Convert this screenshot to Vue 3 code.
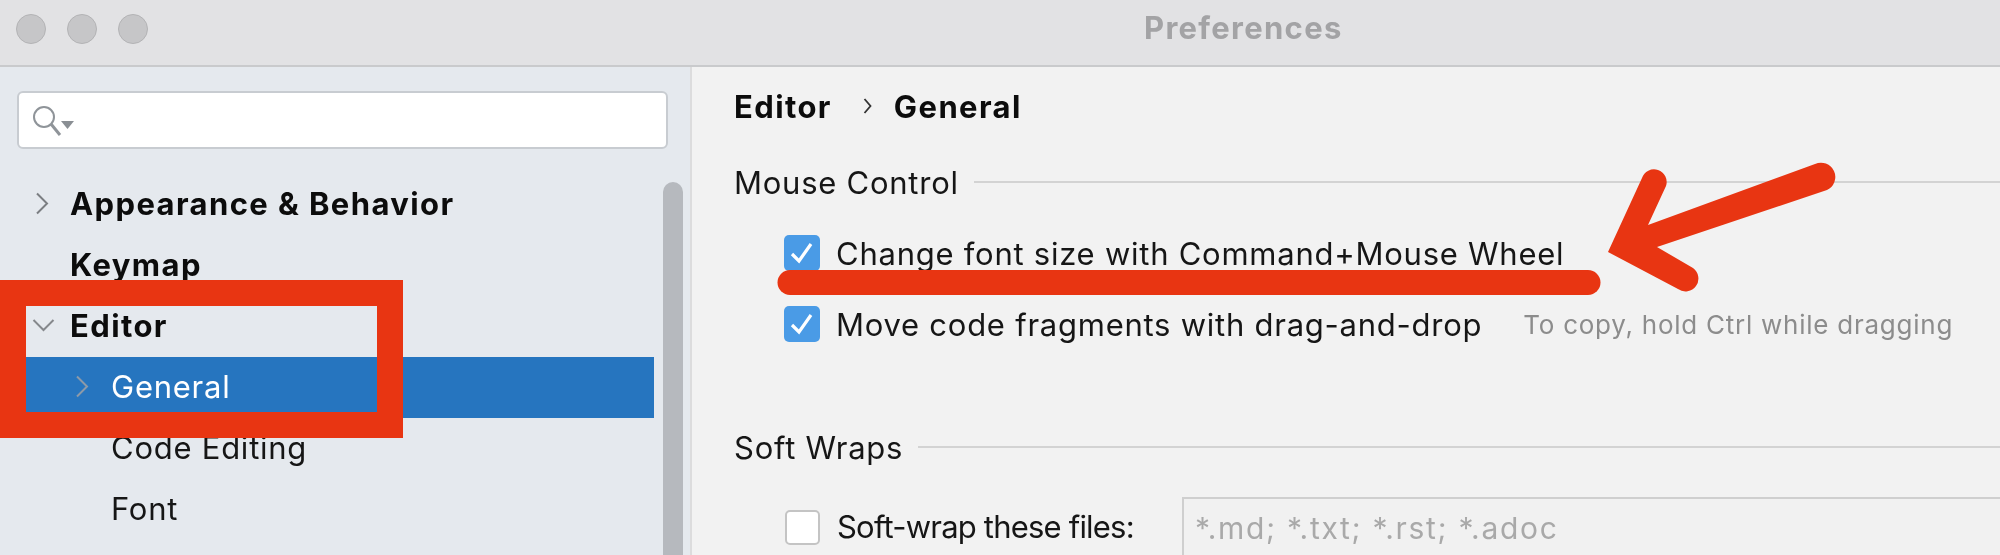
<template>
  <div class="window">
    <header class="titlebar">
      <div class="lights">
        <span class="light"></span>
        <span class="light"></span>
        <span class="light"></span>
      </div>
      <span class="title">Preferences</span>
    </header>

    <div class="body">
      <aside class="sidebar">
        <div class="search">
          <svg class="search-icon" width="44" height="34" viewBox="0 0 44 34">
            <circle cx="11" cy="11" r="10" fill="none" stroke="#8f9499" stroke-width="2" />
            <path d="M18 18 L27 29" fill="none" stroke="#8f9499" stroke-width="3" />
            <path d="M28 15 H41 L34.5 23 Z" fill="#8a8f94" />
          </svg>
        </div>

        <div class="tree">
          <div
            v-for="item in treeItems"
            :key="item.label"
            class="tree-row"
            :class="{ bold: item.depth === 0, selected: item.selected, child: item.depth === 1 }"
          >
            <span class="slot">
              <svg v-if="item.arrow === 'right'" class="chevron" width="14" height="23" viewBox="0 0 14 23">
                <path d="M2 1.5 L12 11.5 L2 21.5" fill="none" :stroke="item.selected ? '#8d9aa8' : '#7b7e82'" stroke-width="2" />
              </svg>
              <svg v-if="item.arrow === 'down'" class="chevron down" width="23" height="14" viewBox="0 0 23 14">
                <path d="M1.5 2 L11.5 12 L21.5 2" fill="none" stroke="#85888c" stroke-width="2" />
              </svg>
            </span>
            <span>{{ item.label }}</span>
          </div>
        </div>

        <div class="scrollbar"></div>
      </aside>

      <main class="content">
        <div class="crumbs">
          <span>Editor</span>
          <svg width="9" height="18" viewBox="0 0 9 18">
            <path d="M1.5 2 L7.5 9 L1.5 16" fill="none" stroke="#333" stroke-width="1.8" />
          </svg>
          <span>General</span>
        </div>

        <div class="section mouse">
          <span>Mouse Control</span>
          <i class="rule"></i>
        </div>

        <label class="check-row first">
          <span class="box on">
            <svg width="36" height="36" viewBox="0 0 36 36">
              <path d="M8 19 L15 26 L27 9" fill="none" stroke="#fff" stroke-width="3.2" />
            </svg>
          </span>
          <span>Change font size with Command+Mouse Wheel</span>
        </label>

        <label class="check-row second">
          <span class="box on">
            <svg width="36" height="36" viewBox="0 0 36 36">
              <path d="M8 19 L15 26 L27 9" fill="none" stroke="#fff" stroke-width="3.2" />
            </svg>
          </span>
          <span>Move code fragments with drag-and-drop</span>
          <span class="hint">To copy, hold Ctrl while dragging</span>
        </label>

        <div class="section wraps">
          <span>Soft Wraps</span>
          <i class="rule"></i>
        </div>

        <div class="wrap-row">
          <span class="box"></span>
          <span class="wrap-label">Soft-wrap these files:</span>
          <div class="files">*.md; *.txt; *.rst; *.adoc</div>
        </div>
      </main>
    </div>

    <!-- hand drawn annotations on top of the screenshot -->
    <div class="red-box"></div>
    <svg class="marks" width="2000" height="555" viewBox="0 0 2000 555">
      <path d="M790 282.5 H1588" stroke="#e83512" stroke-width="25" stroke-linecap="round" fill="none" />
      <path
        d="M1608 252 L1642 178 A12.5 12.5 0 0 1 1666 186 L1648 225 L1815 164 A14 14 0 0 1 1827 190 L1657 247 L1693 268 A12.5 12.5 0 0 1 1678 289 Z"
        fill="#e83512"
      />
    </svg>
  </div>
</template>

<script setup>
const treeItems = [
  { label: 'Appearance & Behavior', depth: 0, arrow: 'right' },
  { label: 'Keymap', depth: 0 },
  { label: 'Editor', depth: 0, arrow: 'down' },
  { label: 'General', depth: 1, arrow: 'right', selected: true },
  { label: 'Code Editing', depth: 1 },
  { label: 'Font', depth: 1 }
]
</script>

<style scoped>
.window {
  position: relative;
  width: 2000px;
  height: 555px;
  overflow: hidden;
  background: #f2f2f2;
  color: #161616;
  font-family: Inter, "Liberation Sans", sans-serif;
  font-size: 31px;
  letter-spacing: 0.75px;
}

.titlebar {
  position: relative;
  display: flex;
  align-items: center;
  box-sizing: border-box;
  height: 67px;
  padding: 0 0 10px 1144px;
  background: #e2e2e4;
  border-bottom: 2px solid #c9cacc;
  filter: blur(0.7px);
}

.lights {
  position: absolute;
  left: 16px;
  top: 14px;
  display: flex;
  gap: 21px;
}

.light {
  width: 30px;
  height: 30px;
  border-radius: 50%;
  background: #c6c6c8;
  border: 1px solid #b3b3b5;
  box-sizing: border-box;
}

.title {
  font-weight: 700;
  letter-spacing: 1.3px;
  color: #a3a3a5;
}

.body {
  display: flex;
  height: 488px;
  filter: blur(0.7px);
}

.sidebar {
  position: relative;
  flex: 0 0 690px;
  background: #e5e9ee;
  border-right: 2px solid #dcdcdd;
}

.search {
  display: flex;
  align-items: center;
  box-sizing: border-box;
  width: 651px;
  height: 58px;
  margin: 24px 0 25px 17px;
  padding-left: 14px;
  background: #fff;
  border: 2px solid #c8ccd1;
  border-radius: 6px;
}

.search-icon {
  margin-top: 6px;
}

.tree {
  width: 628px;
  margin-left: 26px;
}

.tree-row {
  display: flex;
  align-items: center;
  box-sizing: border-box;
  height: 61px;
  padding-bottom: 2px;
}

.tree-row.bold {
  font-weight: 700;
  letter-spacing: 1.4px;
  color: #0c0c0c;
}

.tree-row.selected {
  background: #2675bf;
  color: #fff;
}

.slot {
  position: relative;
  flex: 0 0 44px;
  height: 100%;
}

.child .slot {
  flex-basis: 85px;
}

.chevron {
  position: absolute;
  left: 9px;
  top: 18px;
}

.chevron.down {
  left: 6px;
  top: 22px;
}

.child .chevron {
  left: 49px;
}

.scrollbar {
  position: absolute;
  left: 663px;
  top: 115px;
  width: 20px;
  height: 400px;
  background: #b6b9be;
  border-radius: 10px;
}

.content {
  flex: 1;
  min-width: 0;
  padding: 19px 0 0 42px;
}

.crumbs {
  display: flex;
  align-items: center;
  height: 40px;
  font-weight: 700;
  letter-spacing: 1.4px;
  color: #0c0c0c;
}

.crumbs svg {
  margin: 0 22px 0 31px;
}

.section {
  display: flex;
  align-items: center;
  height: 40px;
}

.section.mouse {
  margin-top: 36px;
}

.section.wraps {
  margin-top: 83px;
}

.rule {
  flex: 1;
  height: 2px;
  margin-left: 15px;
  background: #d3d3d3;
}

.check-row {
  display: flex;
  align-items: center;
  height: 40px;
  margin-left: 50px;
}

.check-row.first {
  margin-top: 31px;
}

.check-row.second {
  margin-top: 31px;
}

.box {
  flex: 0 0 auto;
  box-sizing: border-box;
  width: 35px;
  height: 35px;
  margin-right: 16px;
  background: #fff;
  border: 2px solid #c4c4c4;
  border-radius: 5px;
}

.box.on {
  width: 36px;
  height: 36px;
  background: #4a9be6;
  border: none;
}

.box svg {
  display: block;
}

.hint {
  margin-left: 41px;
  font-size: 26px;
  color: #8c8c8c;
}

.wrap-row {
  display: flex;
  align-items: flex-start;
  margin: 30px 0 0 50px;
}

.wrap-row .box {
  margin: 13px 17px 0 1px;
}

.wrap-label {
  width: 345px;
  flex: 0 0 auto;
  line-height: 60px;
  letter-spacing: -0.8px;
  white-space: nowrap;
}

.files {
  flex: 1;
  height: 60px;
  padding-left: 11px;
  line-height: 58px;
  font-size: 30px;
  letter-spacing: 1.7px;
  color: #a9a9a9;
  background: #f1f1f1;
  border-top: 2px solid #cfcfcf;
  border-left: 2px solid #cfcfcf;
}

.red-box {
  position: absolute;
  left: 0;
  top: 280px;
  width: 351px;
  height: 106px;
  border: 26px solid #e83512;
}

.marks {
  position: absolute;
  left: 0;
  top: 0;
  pointer-events: none;
}
</style>
